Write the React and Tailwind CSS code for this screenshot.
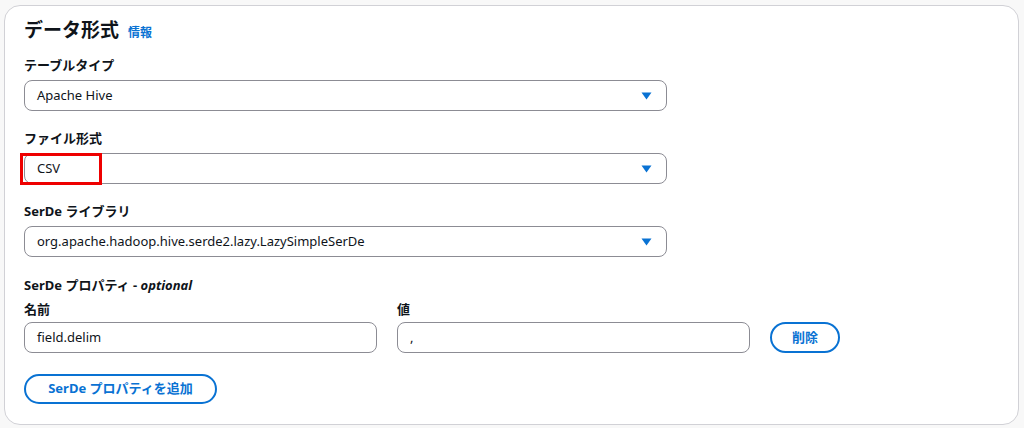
import React from 'react';

const font = { fontFamily: '"Noto Sans", "Noto Sans CJK JP", sans-serif' };

const Caret = () => (
  <svg width="11" height="8" viewBox="0 0 11 8" className="shrink-0">
    <path d="M0.5 0.5 L10.5 0.5 L5.5 7.5 Z" fill="#0972d3" />
  </svg>
);

const SelectBox = ({ value, highlight }) => (
  <div className="relative w-[643px] h-[31px] border border-[#8c8c94] rounded-lg bg-white flex items-center justify-between pl-[12px] pr-[14px]">
    <span className="text-[13px] text-[#0f141a]">{value}</span>
    <Caret />
    {highlight && (
      <div className="absolute left-[-5px] top-[-1px] w-[82px] h-[32px] border-[3px] border-[#ee0000]" />
    )}
  </div>
);

const Label = ({ children, className = '' }) => (
  <div className={`text-[13px] leading-[20px] font-bold text-[#0f141a] ${className}`}>{children}</div>
);

const TextInput = ({ value }) => (
  <div className="w-[353px] h-[31px] border border-[#8c8c94] rounded-lg bg-white flex items-center pl-[12px]">
    <span className="text-[13px] text-[#0f141a]">{value}</span>
  </div>
);

export default function App() {
  return (
    <div className="w-[1024px] h-[428px] bg-[#f8f8f8] pt-[5px] pl-[4px]" style={font}>
      <div className="w-[1015px] h-[420px] bg-white border border-[#d1d1d6] rounded-[16px] pl-[19px] pt-[12px]">
        <div className="flex items-baseline gap-[9px] leading-[24px]">
          <h2 className="text-[19px] font-bold text-[#0f141a]">データ形式</h2>
          <span className="text-[12px] font-bold text-[#0972d3]">情報</span>
        </div>

        <Label className="mt-[10px] mb-[5px]">テーブルタイプ</Label>
        <SelectBox value="Apache Hive" />

        <Label className="mt-[17px] mb-[5px]">ファイル形式</Label>
        <SelectBox value="CSV" highlight />

        <Label className="mt-[17px] mb-[5px]">SerDe ライブラリ</Label>
        <SelectBox value="org.apache.hadoop.hive.serde2.lazy.LazySimpleSerDe" />

        <Label className="mt-[18px]">
          SerDe プロパティ - <span className="italic">optional</span>
        </Label>
        <div className="flex items-end gap-[20px] mt-[4px]">
          <div>
            <Label className="mb-[3px]">名前</Label>
            <TextInput value="field.delim" />
          </div>
          <div>
            <Label className="mb-[3px]">値</Label>
            <TextInput value="," />
          </div>
          <button className="w-[70px] h-[31px] rounded-full border-2 border-[#0972d3] text-[13px] font-bold text-[#0972d3] bg-white">
            削除
          </button>
        </div>

        <button className="mt-[21px] w-[193px] h-[30px] rounded-full border-2 border-[#0972d3] text-[13px] font-bold text-[#0972d3] bg-white">
          SerDe プロパティを追加
        </button>
      </div>
    </div>
  );
}
